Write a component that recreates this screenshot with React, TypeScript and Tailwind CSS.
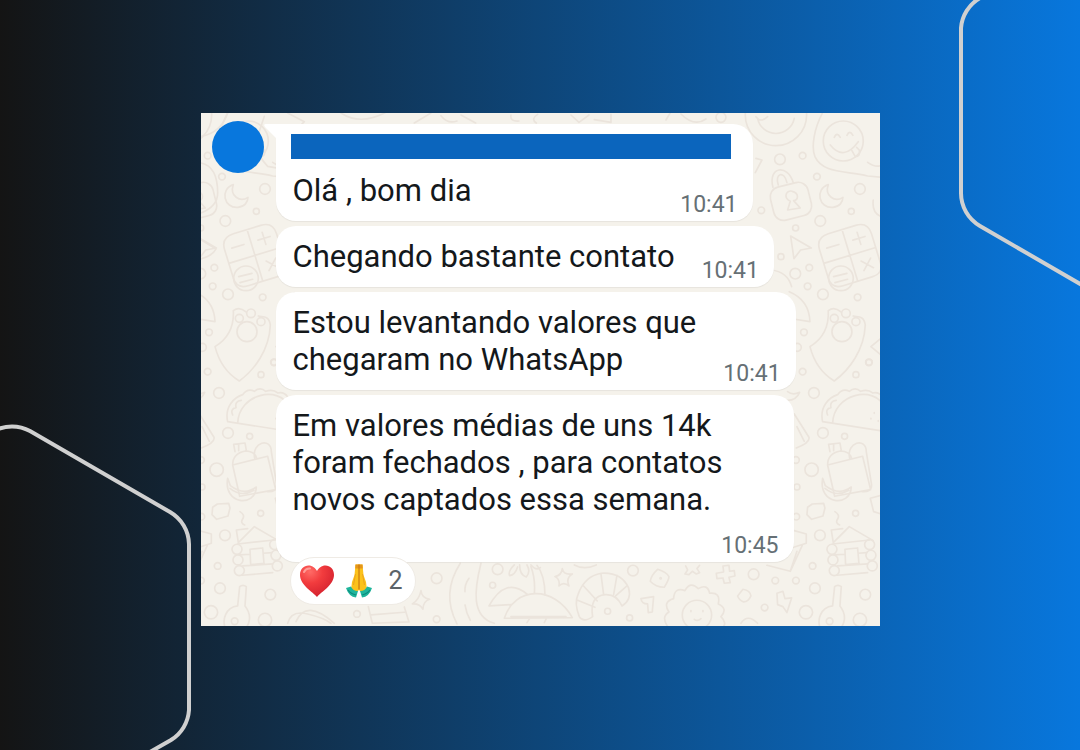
import React from 'react'
import { cva } from 'class-variance-authority'

type Message = {
  lines: string[]
  time: string
  first?: boolean
  stacked?: boolean
}

const messages: Message[] = [
  { lines: ['Olá , bom dia'], time: '10:41', first: true },
  { lines: ['Chegando bastante contato'], time: '10:41' },
  { lines: ['Estou levantando valores que', 'chegaram no WhatsApp'], time: '10:41' },
  {
    lines: ['Em valores médias de uns 14k', 'foram fechados , para contatos', 'novos captados essa semana.'],
    time: '10:45',
    stacked: true,
  },
]

const bubble = cva('relative rounded-[20px] bg-white pb-1 pl-[17px] pr-[15px] shadow-[0_1px_1px_rgba(0,0,0,0.06)]', {
  variants: {
    kind: {
      first: 'w-[477px] pt-[10px]',
      inline: 'pt-3',
      stacked: 'w-[518px] pt-3',
    },
  },
})

// [cx, cy, r]
const upperDots = [
  [417, 148, 16], [485, 137, 10], [528, 200, 10], [657, 237, 16], [631, 304, 9], [538, 333, 16],
  [464, 354, 9], [361, 301, 10], [420, 440, 9], [463, 491, 16], [505, 473, 10], [500, 529, 10],
  [546, 553, 16], [650, 562, 10], [489, 667, 10], [469, 712, 12], [684, 757, 10], [240, 22, 15],
]

const lowerDots = [
  [485, 35, 10], [645, 44, 9], [684, 7, 9], [519, 99, 16], [546, 219, 16], [611, 229, 9],
  [512, 329, 20], [465, 300, 10], [468, 381, 9], [466, 470, 10], [644, 460, 9], [537, 526, 16],
  [515, 618, 10], [522, 685, 16], [465, 662, 10], [403, 662, 10], [338, 643, 16], [371, 743, 10],
  [495, 757, 20], [673, 704, 16], [657, 780, 20],
]

const Dots = ({ items }: { items: number[][] }) => (
  <>
    {items.map(([cx, cy, r]) => (
      <circle key={`${cx}-${cy}`} cx={cx} cy={cy} r={r} />
    ))}
  </>
)

const Wallpaper = () => (
  <svg
    aria-hidden="true"
    className="pointer-events-none absolute inset-0 h-full w-full"
    fill="none"
    stroke="#ebe4dc"
    strokeWidth="5"
    strokeLinecap="round"
    strokeLinejoin="round"
  >
    <defs>
      <g id="doodles">
        <g transform="translate(-465 -9)">
          <Dots items={upperDots} />
          <circle cx="405" cy="15" r="92" />
          <path d="M350 25a56 56 0 0 0 110 0M345 20q15 20 35 0" />
          <path d="M545 8C520 55 510 110 522 140C545 190 610 182 680 198L725 202M725 165q-20 10-45-8" />
          <circle cx="607" cy="93" r="60" />
          <path d="M580 82q8-18 18 0M618 76q8-18 18 0M568 105q40 50 84-10M633 122l10 18q16 0 12-20l-8-8" />
          {/* padlock */}
          <rect x="392" y="223" width="116" height="102" rx="30" transform="rotate(-14 450 274)" />
          <path d="M396 232C380 170 440 160 457 218M412 225C400 190 430 180 438 218M440 300l8-26c-24-12-10-36 6-30c22 6 18 26 4 28l20 22z" />
          {/* moon */}
          <path d="M562 224c-42 14-28 72 14 68c20-2 30-16 30-30c-24 16-56-4-44-38z" />
          <path d="M449 378l62 36l-32 6l-20 26z" />
          {/* calculator */}
          <g transform="rotate(-17 628 440)">
            <path d="M585 355h86q38 0 38 38v90q0 34-34 34H582q-36 0-36-34v-90q0-38 39-38zM628 355v162M546 436h163M568 395h38M650 395h38M669 376v38M655 462l30 30M685 462l-30 30" />
          </g>
          <circle cx="600" cy="505" r="37" />
          <path d="M578 500l40-10M582 518l38-10" />
          <path d="M390 480q50 5 62 50M445 545q60 25 62 90l-50-8M745 548a38 38 0 0 0 0 66M345 145l18 5l-20 38M75 30l15-25M120 12q40 40 75 15" />
          <path d="M697 270q-5 40 25 50M690 710l30-25M690 710l30 25" />
        </g>

        {/* guitar pick with beads */}
        <g transform="translate(0 501)">
          <path d="M97 92C100 150 72 182 42 200C55 250 85 285 115 303C160 270 205 210 208 135C204 105 184 112 172 108M97 92q18-14 38 4" />
          <circle cx="138" cy="155" r="30" />
          <circle cx="115" cy="115" r="12" />
          <circle cx="150" cy="100" r="13" />
          <circle cx="180" cy="125" r="12" />
        </g>

        <g transform="translate(-465 741)">
          <Dots items={lowerDots} />
          {/* taco */}
          <path d="M545 185C535 140 565 112 590 104q15-20 35-10q18-14 34 0q22-8 36 5q20-4 30 12M575 190C578 100 700 75 730 140M545 185l180 28M560 165q-8-18 10-22q-4-20 16-22M690 175v2M700 158v2M712 182v2" />
          {/* lunch bag */}
          <path d="M560 315l105-26l24 100l-108 20zM560 315q0-35 38-42q28 0 34 22M567 275l-4-22l34-4l4 22M578 252v20M626 295c-10-50 50-64 50-20l16 100q0 22-28 20" />
          <path d="M545 355c-14 80 84 88 86 26q-36 28-78-4zM552 385q34 28 72 6" />
          <path d="M500 442l14-10l34-2l4 14l-6 24l-34 10l-14-14zM582 455q16 10 8 22t6 18" />
          {/* cabin */}
          <path d="M577 548l-6-38l34-4M577 548l48-48l72 42M575 552l110-12M612 568l38-4l4 46l-40 4zM580 585l32-2M652 580l26-2M590 618l90-6M588 646l92-8" />
          <circle cx="573" cy="568" r="15" />
          <circle cx="576" cy="600" r="15" />
          <circle cx="580" cy="632" r="15" />
          <circle cx="686" cy="554" r="15" />
          <circle cx="690" cy="586" r="15" />
          <circle cx="694" cy="618" r="15" />
          <path d="M460 162l44 70q4 16-38 32M468 200l22 44M460 512l36 10v28l-38 12M484 556l-36 78l-70-18M448 634l20-60" />
          <path d="M440 95q15 12 36 2q-10 24-36 24M688 415l30-8M688 415l10 40l20 6" />
          {/* small guitar */}
          <path d="M575 738l6-58q10-8 20 0l-4 58c24 30 12 60-4 72M575 738c-36 4-50 44-34 72" />
          <circle cx="566" cy="784" r="10" />
          {/* crosses, dice and bolts */}
          <path d="M246 618l18-2l2 18l14-2l2 16l-18 4l4 16l-18 2l-4-16l-18 2l-2-16l22-4zM134 618l6 12l-8 12l12 2l10-10l12 8l10-4l-8-12l8-10" />
          <path d="M50 628q26 8 34 22q0 10-14 32q-26 0-42-18q2-18 22-36zM306 688q22 4 24 20q-8 18-22 18q-14-6-18-18zM408 700l18-6l6 22l20-2l-14 44l-12-18l-16-6z" />
          <circle cx="59" cy="655" r="2" />
          {/* flower with a face */}
          <path d="M80 800q-20-30 4-44q-20-30 14-40q2-36 34-24q16-30 40-6q28-16 34 14q34-4 26 32q30 14 8 38q20 20 4 34" />
          <circle cx="168" cy="765" r="44" />
          <path d="M150 752v3M186 752v3M160 778q10 8 20-2M0 716l38-6l-4 46l-12 2l-2-26q-18 0-20-16zM300 790q20-30 50 0" />
        </g>
      </g>
    </defs>
    <g transform="scale(0.3333)">
      <use href="#doodles" />
      <use href="#doodles" x="1785" />
      {/* beach strip along the bottom */}
      <g transform="translate(600 1311)">
        <path d="M178 40Q120 130 168 222M240 40C220 120 210 200 280 220M204 85q-14 20-12 40M192 165q4 26 16 46" />
        <path d="M310 205c30-96 150-100 204-2zM330 200h165M264 168q50-90 115-35M264 168l66-4M400 132q4-44-10-82M432 136q0-60-24-90M386 206l-8 12M436 206l-6 12" />
        <path d="M340 45q-20 20-14 32q16-2 24-26M356 45q0 30 20 36q14-16 2-36M390 45q16 18 28 8" />
        <circle cx="290" cy="58" r="16" />
        <circle cx="275" cy="106" r="9" />
        <circle cx="107" cy="85" r="16" />
        <circle cx="107" cy="208" r="10" />
        <circle cx="-132" cy="192" r="10" />
        <path d="M484 56q4 20 30 16q-20 12-10 36q-16-14-30 0q4-20-12-28q20-4 22-24zM60 122q2 22 26 26q-20 6-20 30q-10-18-32-16q20-12 26-40z" />
        {/* croissant */}
        <path d="M575 200q-28 20-40 0q-16-40-4-66q20-56 70-64q60-4 82 44q10 36-20 54q-16-36-50-34q-48 4-38 66zM528 150l54 22M545 105l44 48M600 72l8 62M648 76l-10 58M678 108l-34 30" />
        <circle cx="620" cy="184" r="9" />
        <circle cx="686" cy="204" r="9" />
        <circle cx="696" cy="62" r="16" />
        <path d="M520 45q30 16 66 0" />
        <path d="M-98 170l12 50l110-4l-14-45M-90 195l100-8M-340 220q10-40 60-28t70 28M-315 215q30-70 115 5" />
      </g>
      {/* shapes peeking out above the first bubble */}
      <path d="M190 10l-20 60q-10 50 30 90l55 10M260 0l50 26l-20 20M420 0q60 40 140-5M640 30l50-30M720 8q20 26 48 16M780 6l44 24M930 6q-4 20 24 18M1010 4q-22 14-4 26M1110 6l24 22l30-22M1180 20l50 8v-24" />
      <path d="M0 70q60-10 80-70M0 150q50 10 50 90q0 40-50 60M0 380l45 28q-10 20-45 30" />
    </g>
  </svg>
)

const Heart = () => (
  <svg role="img" aria-label="Coração" viewBox="0 0 36 34" className="h-[34px] w-9">
    <defs>
      <radialGradient id="heart" cx="0.3" cy="0.2" r="0.9">
        <stop offset="0" stopColor="#ff6b66" />
        <stop offset="0.4" stopColor="#f23c3e" />
        <stop offset="1" stopColor="#cf1d2c" />
      </radialGradient>
    </defs>
    <path
      d="M18 33C14 28 1 21 1 11C1 5 5 1.500 9.500 1.500C13.500 1.500 16.500 4 18 7C19.500 4 22.500 1.500 26.500 1.500C31 1.500 35 5 35 11C35 21 22 28 18 33z"
      fill="url(#heart)"
    />
    <path d="M5 8q2-4 6-3.500" stroke="#ff9d97" strokeWidth="2" strokeLinecap="round" fill="none" />
  </svg>
)

const Hands = () => (
  <svg role="img" aria-label="Mãos unidas" viewBox="0 0 28 36" className="h-9 w-7">
    <path d="M13.500 1.500H10.500L9.500 12L7 19L6 27L9 31L14 27L19 31L22 27L21 19L18.500 12L17.500 1.500z" fill="#fcc21b" />
    <path d="M10.500 1.500h7l.3 4h-7.600z" fill="#e5961c" />
    <path d="M14 1.500v25" stroke="#c97a10" strokeWidth="1.200" />
    <path d="M10.500 11L8.500 22M17.500 11L19.500 22" stroke="#eda41c" strokeWidth="1" fill="none" />
    <path d="M1 25L6 23.500Q8 28 13 28L11 34.500Q4 34 1 25z" fill="#1fb59b" />
    <path d="M27 25L22 23.500Q20 28 15 28L17 34.500Q24 34 27 25z" fill="#1fb59b" />
    <path d="M3 27q3 4 8 5M25 27q-3 4-8 5" stroke="#0b8b80" strokeWidth="1.200" fill="none" />
  </svg>
)

const Bubble: React.FC<Message> = ({ lines, time, first, stacked }) => {
  const text = (
    <p className="whitespace-nowrap text-[31px] leading-[37px] text-[#14181b]">
      {lines.map((line) => (
        <span key={line} className="block">
          {line}
        </span>
      ))}
    </p>
  )
  const stamp = <time className="block text-right text-[23px] leading-6 text-[#667075]">{time}</time>

  return (
    <li className={bubble({ kind: first ? 'first' : stacked ? 'stacked' : 'inline' })}>
      {first && (
        <>
          <svg aria-hidden="true" viewBox="0 0 32 20" className="absolute -left-3 top-0 h-5 w-8" fill="#fff">
            <path d="M2 0H32V20H12V14L1 3Q-1 0 2 0z" />
          </svg>
          <div className="relative -ml-[2px] mb-[13px] h-[25px] w-[440px] bg-[#0b65bd]" />
        </>
      )}
      {stacked ? (
        <>
          {text}
          <div className="pt-4">{stamp}</div>
        </>
      ) : (
        <div className="flex items-end justify-between gap-[27px]">
          <div className="pb-2">{text}</div>
          {stamp}
        </div>
      )}
    </li>
  )
}

export default function App() {
  return (
    <main className="relative flex min-h-screen items-center justify-center overflow-hidden bg-linear-to-r/srgb from-[#141414] to-[#0877dd] pb-[11px] font-[Roboto,sans-serif]">
      {/* Corner hexagons */}
      <svg
        aria-hidden="true"
        viewBox="0 0 192 330"
        className="absolute bottom-0 left-0 h-[330px] w-48"
        fill="none"
        stroke="#d0d0d0"
        strokeWidth="4"
      >
        <path d="M-6 11A38 38 0 0 1 30 11L170 92A38 38 0 0 1 189 124V290A38 38 0 0 1 171 320L150 332" />
      </svg>
      <svg
        aria-hidden="true"
        viewBox="0 0 125 290"
        className="absolute right-0 top-0 h-[290px] w-[125px]"
        fill="none"
        stroke="#d0d0d0"
        strokeWidth="4"
      >
        <path d="M25 -2A38 38 0 0 0 6 28V193A38 38 0 0 0 25 226L127 285" />
      </svg>

      {/* Chat */}
      <section className="relative w-full max-w-[679px] overflow-hidden bg-[#f5f2eb] pb-[21px] pl-[11px] pt-[11px]">
        <Wallpaper />
        <div className="relative flex items-start gap-3">
          <div className="-mt-[3px] size-[52px] shrink-0 rounded-full bg-[#0877dd]" />
          <div>
            <ul className="flex flex-col items-start gap-[5px]">
              {messages.map((message) => (
                <Bubble key={message.lines[0]} {...message} />
              ))}
            </ul>
            <button
              type="button"
              className="relative -mt-[5px] ml-[14px] flex h-12 items-center rounded-full border border-[#efebe5] bg-white pl-2 pr-3 text-[25px] text-[#5b6368]"
            >
              <Heart />
              <span className="ml-[10px] mr-4">
                <Hands />
              </span>
              2
            </button>
          </div>
        </div>
      </section>
    </main>
  )
}
